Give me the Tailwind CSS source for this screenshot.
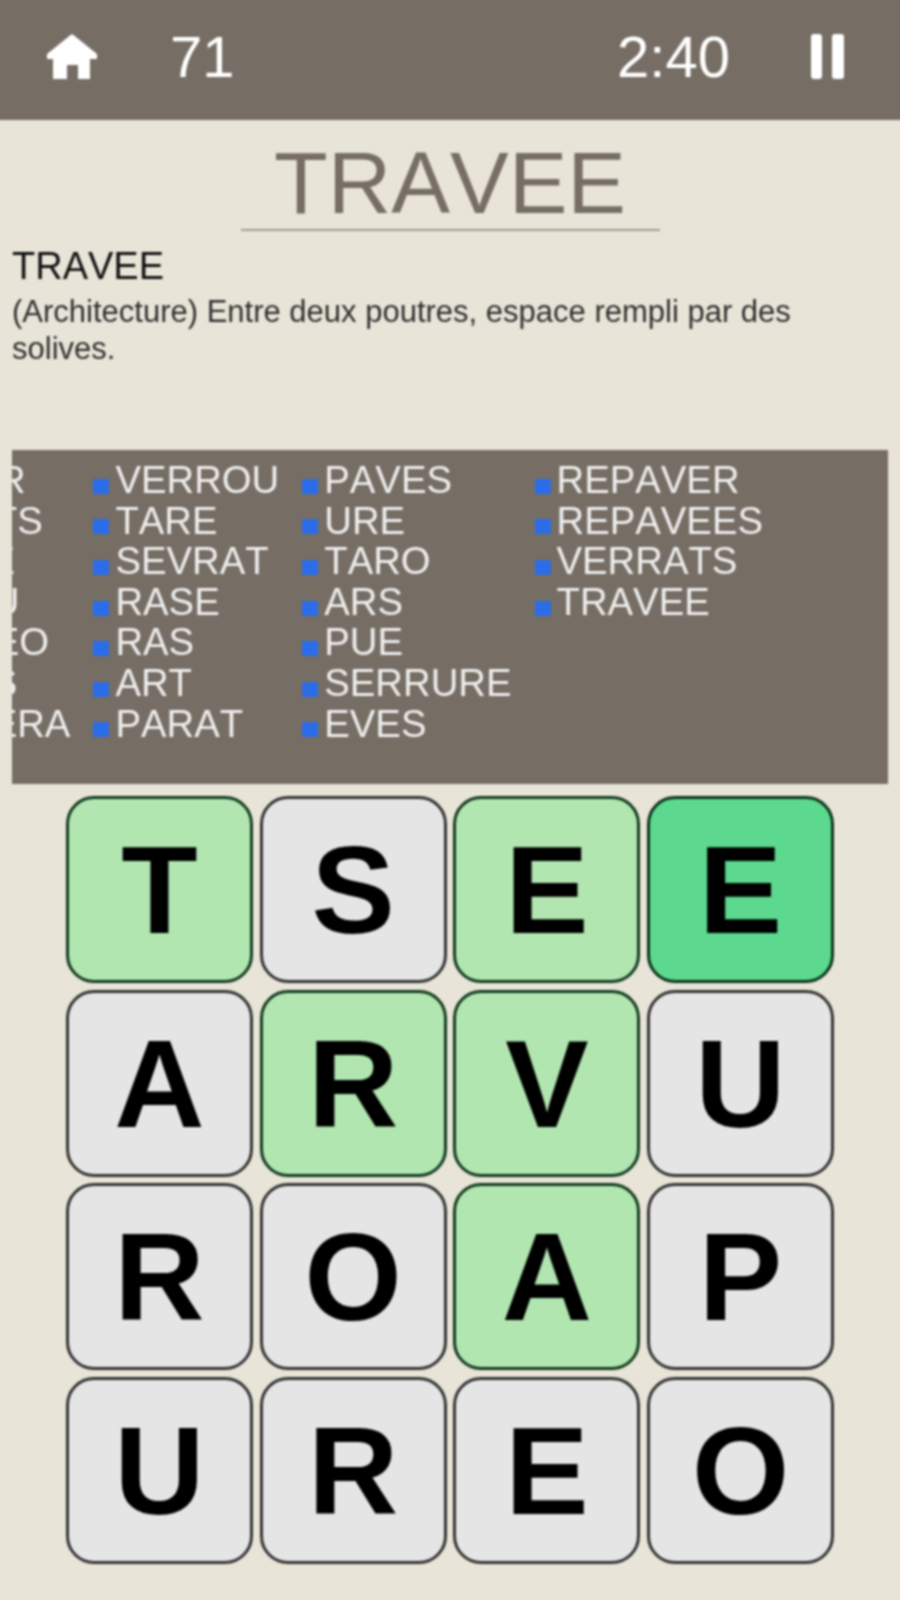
<!DOCTYPE html>
<html lang="fr">
<head>
    <meta charset="UTF-8">
    <title>TRAVEE</title>
    <script src="https://cdn.jsdelivr.net/npm/@tailwindcss/browser@4"></script>
</head>
<body class="bg-[#e8e5d8] font-['Liberation_Sans',Arial,sans-serif] [font-kerning:none] w-[900px] h-[1600px] overflow-hidden">
<div class="blur-[0.8px] ml-[-4px] mt-[-4px] w-[908px]">

    <!-- top bar -->
    <header class="h-[124px] pt-[4px] pb-[7px] px-[4px] bg-[#766d64] flex items-center text-white">
        <svg class="ml-[47px] w-[50px] h-[45px]" viewBox="0 0 50 45" fill="#ffffff"><path d="M23.5 1 Q25 -0.5 26.5 1 L50 20 L50 25 L43 25 L43 45 L31 45 L31 31 L20 31 L20 45 L6 45 L6 25 L0 25 L0 20 Z"/></svg>
        <span class="ml-[73px] text-[58px] leading-none">71</span>
        <span class="ml-auto text-[58px] leading-none">2:40</span>
        <div class="ml-[81px] mr-[56px] flex gap-[10px]">
            <div class="w-[11px] h-[45px] bg-white rounded-[3px]"></div>
            <div class="w-[12px] h-[45px] bg-white rounded-[3px]"></div>
        </div>
    </header>

    <!-- word and definition -->
    <div class="h-[330px] mx-[4px] flex flex-col">
        <div class="w-[419px] mx-auto mt-[15px] h-[96px] pt-[4px] border-b-2 border-[#a39c8f] text-center text-[#766d64] text-[88px] leading-[88px]">TRAVEE</div>
        <h2 class="ml-[12px] mt-[13px] text-[38px] leading-[44px] text-[#111111]">TRAVEE</h2>
        <p class="mx-[12px] mt-[6px] text-[31px] leading-[36.7px] text-[#2f2f2f]">(Architecture) Entre deux poutres, espace rempli par des solives.</p>
    </div>

    <!-- found words -->
    <div class="mx-[16px] h-[334px] bg-[#766d64] overflow-hidden pt-[10px] text-[38.3px] leading-[40.6px] text-[#efefef]">
        <div class="flex gap-[23px] ml-[-119px] w-max">
            <ul>
                <li class="flex items-center"><span class="w-[16px] h-[15px] mr-[6px] mt-[12px] bg-[#2b6de8]"></span>LISER</li>
                <li class="flex items-center"><span class="w-[16px] h-[15px] mr-[6px] mt-[12px] bg-[#2b6de8]"></span>PARTS</li>
                <li class="flex items-center"><span class="w-[16px] h-[15px] mr-[6px] mt-[12px] bg-[#2b6de8]"></span>TAPE</li>
                <li class="flex items-center"><span class="w-[16px] h-[15px] mr-[6px] mt-[12px] bg-[#2b6de8]"></span>PEAU</li>
                <li class="flex items-center"><span class="w-[16px] h-[15px] mr-[6px] mt-[12px] bg-[#2b6de8]"></span>PAREO</li>
                <li class="flex items-center"><span class="w-[16px] h-[15px] mr-[6px] mt-[12px] bg-[#2b6de8]"></span>AVES</li>
                <li class="flex items-center"><span class="w-[16px] h-[15px] mr-[6px] mt-[12px] bg-[#2b6de8]"></span>SEVERA</li>
            </ul>
            <ul>
                <li class="flex items-center"><span class="w-[16px] h-[15px] mr-[6px] mt-[12px] bg-[#2b6de8]"></span>VERROU</li>
                <li class="flex items-center"><span class="w-[16px] h-[15px] mr-[6px] mt-[12px] bg-[#2b6de8]"></span>TARE</li>
                <li class="flex items-center"><span class="w-[16px] h-[15px] mr-[6px] mt-[12px] bg-[#2b6de8]"></span>SEVRAT</li>
                <li class="flex items-center"><span class="w-[16px] h-[15px] mr-[6px] mt-[12px] bg-[#2b6de8]"></span>RASE</li>
                <li class="flex items-center"><span class="w-[16px] h-[15px] mr-[6px] mt-[12px] bg-[#2b6de8]"></span>RAS</li>
                <li class="flex items-center"><span class="w-[16px] h-[15px] mr-[6px] mt-[12px] bg-[#2b6de8]"></span>ART</li>
                <li class="flex items-center"><span class="w-[16px] h-[15px] mr-[6px] mt-[12px] bg-[#2b6de8]"></span>PARAT</li>
            </ul>
            <ul>
                <li class="flex items-center"><span class="w-[16px] h-[15px] mr-[6px] mt-[12px] bg-[#2b6de8]"></span>PAVES</li>
                <li class="flex items-center"><span class="w-[16px] h-[15px] mr-[6px] mt-[12px] bg-[#2b6de8]"></span>URE</li>
                <li class="flex items-center"><span class="w-[16px] h-[15px] mr-[6px] mt-[12px] bg-[#2b6de8]"></span>TARO</li>
                <li class="flex items-center"><span class="w-[16px] h-[15px] mr-[6px] mt-[12px] bg-[#2b6de8]"></span>ARS</li>
                <li class="flex items-center"><span class="w-[16px] h-[15px] mr-[6px] mt-[12px] bg-[#2b6de8]"></span>PUE</li>
                <li class="flex items-center"><span class="w-[16px] h-[15px] mr-[6px] mt-[12px] bg-[#2b6de8]"></span>SERRURE</li>
                <li class="flex items-center"><span class="w-[16px] h-[15px] mr-[6px] mt-[12px] bg-[#2b6de8]"></span>EVES</li>
            </ul>
            <ul>
                <li class="flex items-center"><span class="w-[16px] h-[15px] mr-[6px] mt-[12px] bg-[#2b6de8]"></span>REPAVER</li>
                <li class="flex items-center"><span class="w-[16px] h-[15px] mr-[6px] mt-[12px] bg-[#2b6de8]"></span>REPAVEES</li>
                <li class="flex items-center"><span class="w-[16px] h-[15px] mr-[6px] mt-[12px] bg-[#2b6de8]"></span>VERRATS</li>
                <li class="flex items-center"><span class="w-[16px] h-[15px] mr-[6px] mt-[12px] bg-[#2b6de8]"></span>TRAVEE</li>
            </ul>
        </div>
    </div>

    <!-- letter grid -->
    <div class="mt-[12px] ml-[70px] w-[768px] grid grid-cols-4 gap-[6.67px] text-[125px] leading-none font-bold text-black">
        <div class="h-[187px] rounded-[28px] border-[3.5px] border-[#123a1e] bg-[#b1e6b1] flex items-center justify-center">T</div>
        <div class="h-[187px] rounded-[28px] border-[3.5px] border-[#333333] bg-[#e5e5e5] flex items-center justify-center">S</div>
        <div class="h-[187px] rounded-[28px] border-[3.5px] border-[#123a1e] bg-[#b1e6b1] flex items-center justify-center">E</div>
        <div class="h-[187px] rounded-[28px] border-[3.5px] border-[#0a3319] bg-[#5cd98f] flex items-center justify-center">E</div>
        <div class="h-[187px] rounded-[28px] border-[3.5px] border-[#333333] bg-[#e5e5e5] flex items-center justify-center">A</div>
        <div class="h-[187px] rounded-[28px] border-[3.5px] border-[#123a1e] bg-[#b1e6b1] flex items-center justify-center">R</div>
        <div class="h-[187px] rounded-[28px] border-[3.5px] border-[#123a1e] bg-[#b1e6b1] flex items-center justify-center">V</div>
        <div class="h-[187px] rounded-[28px] border-[3.5px] border-[#333333] bg-[#e5e5e5] flex items-center justify-center">U</div>
        <div class="h-[187px] rounded-[28px] border-[3.5px] border-[#333333] bg-[#e5e5e5] flex items-center justify-center">R</div>
        <div class="h-[187px] rounded-[28px] border-[3.5px] border-[#333333] bg-[#e5e5e5] flex items-center justify-center">O</div>
        <div class="h-[187px] rounded-[28px] border-[3.5px] border-[#123a1e] bg-[#b1e6b1] flex items-center justify-center">A</div>
        <div class="h-[187px] rounded-[28px] border-[3.5px] border-[#333333] bg-[#e5e5e5] flex items-center justify-center">P</div>
        <div class="h-[187px] rounded-[28px] border-[3.5px] border-[#333333] bg-[#e5e5e5] flex items-center justify-center">U</div>
        <div class="h-[187px] rounded-[28px] border-[3.5px] border-[#333333] bg-[#e5e5e5] flex items-center justify-center">R</div>
        <div class="h-[187px] rounded-[28px] border-[3.5px] border-[#333333] bg-[#e5e5e5] flex items-center justify-center">E</div>
        <div class="h-[187px] rounded-[28px] border-[3.5px] border-[#333333] bg-[#e5e5e5] flex items-center justify-center">O</div>
    </div>

</div>
</body>
</html>
